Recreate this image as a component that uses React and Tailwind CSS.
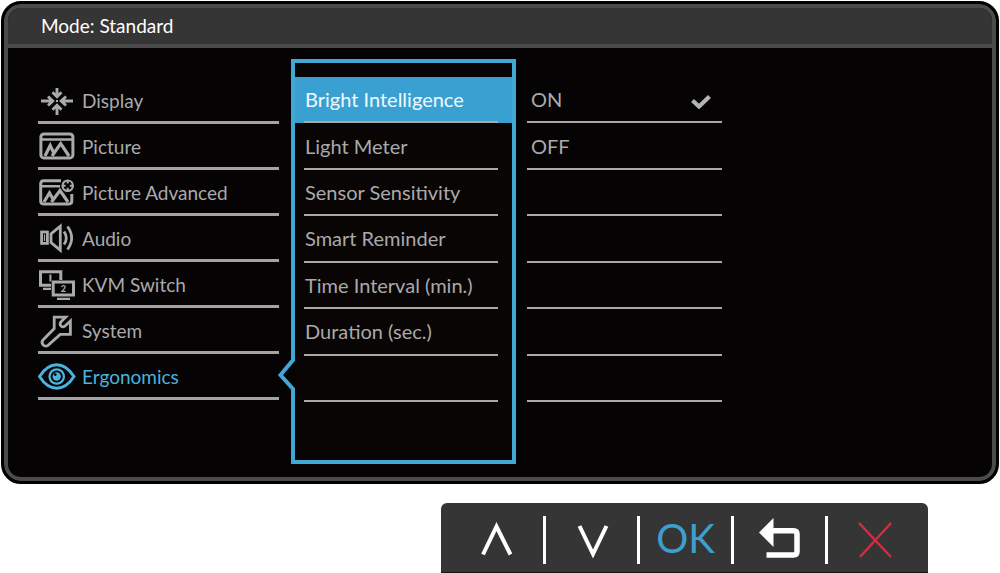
import React from "react";

function DisplayIcon() {
  return (
    <g strokeWidth="2.9">
      <path d="M3 23H14M10 18.5L14.8 23L10 27.5" />
      <path d="M35 23H24M28 18.5L23.2 23L28 27.5" />
      <path d="M19 10V18M14.5 14.3L19 18.8L23.5 14.3" />
      <path d="M19 37V28M14.5 31.7L19 27.2L23.5 31.7" />
      <rect x="18" y="22" width="2" height="2" fill="currentColor" stroke="none" />
    </g>
  );
}

function PictureIcon() {
  return (
    <g>
      <rect x="2.9" y="9.9" width="32" height="24" rx="3" strokeWidth="3" />
      <path d="M3 15.5H35" strokeWidth="2.4" />
      <path d="M7 32L12.2 21.5L16 29.5M14 32L22.7 19.5L31 32" strokeWidth="3.2" />
    </g>
  );
}

function PictureAdvancedIcon() {
  return (
    <g>
      <path d="M23 10.8H5.5Q2.7 10.8 2.7 13.8V31Q2.7 33.9 5.5 33.9H31Q33.8 33.9 33.8 31V24" strokeWidth="3" />
      <path d="M3 16.3H22" strokeWidth="2.4" />
      <path d="M6 32L11.5 23L15.5 30M13.5 32L22 20.5L30 32" strokeWidth="3.2" />
      <circle cx="29.7" cy="15.7" r="5.2" strokeWidth="2.2" />
      <path d="M29.7 10V13.6M29.7 17.8V21.4M24 15.7H27.6M31.8 15.7H35.4" strokeWidth="2" />
    </g>
  );
}

function AudioIcon() {
  return (
    <g strokeWidth="2.8">
      <rect x="3.6" y="16" width="5.8" height="11.4" />
      <path d="M6.5 18.5V25" strokeWidth="1.2" />
      <path d="M13 17.8L22.3 10.2V34.2L13 26.6Z" />
      <path d="M26 15.5Q30.6 22 26 28.5" />
      <path d="M29.5 10.5Q37.8 22 29.5 33.5" />
    </g>
  );
}

function KvmIcon() {
  return (
    <g>
      <path d="M13 23.2H2.5V9.8H22.8V18" strokeWidth="3" />
      <path d="M12.4 12.5V19.5" strokeWidth="2" />
      <path d="M5 26.8H13" strokeWidth="2.2" />
      <rect x="15.2" y="20" width="20.3" height="13" strokeWidth="3" />
      <path d="M19 36.8H32" strokeWidth="2.2" />
      <text x="25.3" y="30" textAnchor="middle" fontSize="9" fontWeight="900" fill="currentColor" stroke="none">
        2
      </text>
    </g>
  );
}

function SystemIcon() {
  return (
    <path
      d="M16.2 9.2H27.6L22.6 14.2Q21.5 16.5 23 18Q24.8 19.6 26.8 18.2L32.4 13V26.4H22.2L10 37.3Q7.4 39.2 5 36.8Q3 34.2 5 32L16.2 20.6Z"
      strokeWidth="2.8"
    />
  );
}

function EyeIcon() {
  return (
    <g>
      <path d="M1.5 22.5Q9 10.8 18.7 10.8Q28.4 10.8 36 22.5Q28.4 34.2 18.7 34.2Q9 34.2 1.5 22.5Z" strokeWidth="3" />
      <circle cx="18.7" cy="22.5" r="7.2" strokeWidth="2.3" />
      <circle cx="18.7" cy="22.5" r="4.2" fill="currentColor" stroke="none" />
      <circle cx="17.2" cy="20.6" r="1.4" fill="#050303" stroke="none" />
    </g>
  );
}

const menu = [
  ["Display", DisplayIcon],
  ["Picture", PictureIcon],
  ["Picture Advanced", PictureAdvancedIcon],
  ["Audio", AudioIcon],
  ["KVM Switch", KvmIcon],
  ["System", SystemIcon],
  ["Ergonomics", EyeIcon],
];

const settings = [
  "Bright Intelligence",
  "Light Meter",
  "Sensor Sensitivity",
  "Smart Reminder",
  "Time Interval (min.)",
  "Duration (sec.)",
];

function MainMenu() {
  return (
    <nav aria-label="Main menu" className="w-[241px] pt-[30px] text-[19px]">
      {menu.map(([label, Icon]) => (
        <button
          key={label}
          className={
            "flex h-[46px] w-full items-center gap-[6px] border-b-[3px] border-[#a3a3a3] text-left " +
            (label === "Ergonomics" ? "text-[#49b2df]" : "text-[#a9aaac]")
          }
        >
          <svg viewBox="0 0 38 43" className="h-[43px] w-[38px] shrink-0" fill="none" stroke="currentColor" aria-hidden="true">
            <Icon />
          </svg>
          <span className="pt-[2px] whitespace-nowrap">{label}</span>
        </button>
      ))}
    </nav>
  );
}

function SettingsPanel() {
  return (
    <section
      aria-label="Ergonomics"
      className="relative ml-3 mt-[11px] w-[225px] border-4 border-[#41a7d5] bg-[#080504] pt-[14px] pb-[58px]"
    >
      <svg viewBox="0 0 18 36" className="absolute -left-[17px] top-[294px] h-9 w-[18px]" aria-hidden="true">
        <path d="M13 4H18V32H13Z" fill="#050303" />
        <path d="M15 0V3L2.5 18L15 32V36" fill="none" stroke="#41a7d5" strokeWidth="4" />
      </svg>
      <div className="grid h-[325px] grid-rows-7">
        {settings.map((label, i) => (
          <button
            key={label}
            className={"flex text-left " + (i === 0 ? "bg-[#3aa0d1] text-[#eefaff]" : "text-[#a9aaac]")}
          >
            <span className="ml-[9px] mr-[14px] flex h-full flex-1 items-center whitespace-nowrap border-b-2 border-[#a9a9a9] pl-px">
              {label}
            </span>
          </button>
        ))}
        <div className="ml-[9px] mr-[14px] border-b-2 border-[#a9a9a9]" />
      </div>
    </section>
  );
}

function Options() {
  return (
    <section aria-label="Bright Intelligence" className="ml-[11px] w-[195px] pt-[29px]">
      <div className="grid h-[325px] grid-rows-7 text-[#a9aaac]">
        <button aria-pressed="true" className="flex items-center justify-between border-b-2 border-[#a9a9a9] pl-1 pr-[11px]">
          <span>ON</span>
          <svg viewBox="0 0 20 16" className="mt-1 h-4 w-5" fill="none" stroke="#b4b4b4" strokeWidth="4.2" aria-hidden="true">
            <path d="M1.5 7.5L8 13.5L18.5 3.5" />
          </svg>
        </button>
        <button aria-pressed="false" className="flex items-center border-b-2 border-[#a9a9a9] pl-1">
          OFF
        </button>
        {[3, 4, 5, 6, 7].map((n) => (
          <div key={n} className="border-b-2 border-[#a9a9a9]" />
        ))}
      </div>
    </section>
  );
}

function Key({ label, last, children }) {
  return (
    <button
      aria-label={label}
      className={
        "flex h-12 w-[94px] items-center justify-center " + (last ? "" : "border-r-[3px] border-white")
      }
    >
      {children}
    </button>
  );
}

function KeyBar() {
  return (
    <div className="ml-auto mr-[71px] mt-[19px] flex h-[70px] w-fit items-center rounded-t-md border-b border-[#161616] bg-[#353536] pr-[6px] pl-[11px] pt-[5px] pb-[1px]">
      <Key label="Up">
        <svg viewBox="0 0 40 40" className="h-10 w-10" fill="none" stroke="#fff" strokeWidth="4">
          <path d="M5 34.5L18.5 6.5L32.5 34.5" />
        </svg>
      </Key>
      <Key label="Down">
        <svg viewBox="0 0 40 40" className="h-10 w-10" fill="none" stroke="#fff" strokeWidth="4">
          <path d="M7.5 6L21 34L34.5 6" />
        </svg>
      </Key>
      <Key label="OK">
        <span className="pb-1 text-[40px] leading-10 text-[#3d9fcd]">OK</span>
      </Key>
      <Key label="Back">
        <svg viewBox="0 0 44 44" className="h-11 w-11">
          <path d="M1 14.5L15.5 0V29Z" fill="#fff" />
          <path d="M14.5 12.8H35.5Q39 12.8 39 16.3V33.5Q39 37 35.5 37H8.5" fill="none" stroke="#fff" strokeWidth="5.5" />
        </svg>
      </Key>
      <Key label="Close" last>
        <svg viewBox="0 0 36 36" className="h-9 w-9" fill="none" stroke="#d02f40" strokeWidth="2.4">
          <path d="M2 1L34 35M34 1L3 35" />
        </svg>
      </Key>
    </div>
  );
}

export default function App() {
  return (
    <div className="bg-white px-px pt-px font-['Lato',sans-serif] text-[20px] leading-6">
      <main className="overflow-hidden rounded-[20px] border-[3px] border-black bg-black">
        <div className="overflow-hidden rounded-[17px] border-4 border-[#4b4b4c] bg-[#050303]">
          <header className="flex h-10 items-center border-b-4 border-[#4b4b4c] bg-[#353536] pl-[33px] text-white">
            <h1 className="text-[19px]">Mode: Standard</h1>
          </header>
          <div className="flex pb-[13px] pl-[30px]">
            <MainMenu />
            <SettingsPanel />
            <Options />
          </div>
        </div>
      </main>
      <KeyBar />
    </div>
  );
}
